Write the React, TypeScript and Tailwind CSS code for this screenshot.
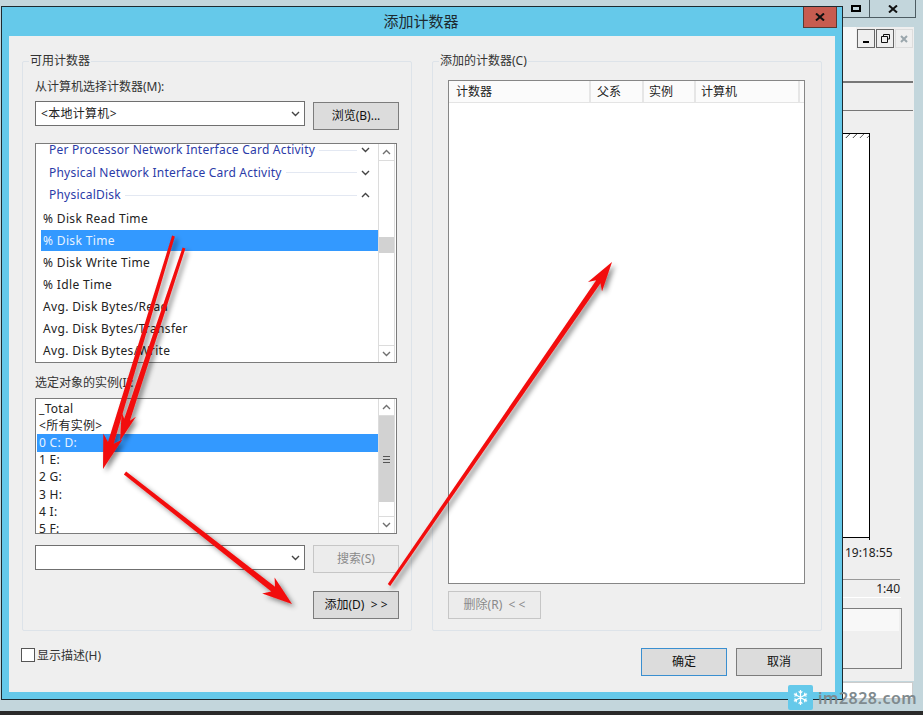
import React from "react";

const ui = { fontFamily: '"Noto Sans", "Noto Sans CJK SC", sans-serif' };

function Chevron({ up = false, color = "#555", w = 9 }: { up?: boolean; color?: string; w?: number }) {
  return (
    <svg width={w} height={6} viewBox="0 0 9 6" className="block">
      <path d={up ? "M1 5 L4.5 1.5 L8 5" : "M1 1 L4.5 4.5 L8 1"} fill="none" stroke={color} strokeWidth="1.4" />
    </svg>
  );
}

function Btn({ children, disabled, primary, wide }: { children: React.ReactNode; disabled?: boolean; primary?: boolean; wide?: boolean }) {
  const look = disabled
    ? "border-[#c6c6c6] bg-[#ececec] text-[#8a8a8a]"
    : primary
      ? "border-[#3a8fd0] bg-[#dcdcdc] text-[#111]"
      : "border-[#7c7c7c] bg-[#dcdcdc] text-[#111]";
  return <div className={`flex h-[28px] items-center justify-center border text-[12px] ${wide ? "w-[93px]" : "w-[86px]"} ${look}`}>{children}</div>;
}

function Select({ text }: { text?: string }) {
  return (
    <div className="flex h-[25px] w-[270px] items-center justify-between border border-[#6f6f6f] bg-white pl-[5px] pr-[4px] text-[12px] tracking-[0.3px] text-[#222]">
      <span>{text}</span>
      <Chevron color="#444" />
    </div>
  );
}

function Group({ title, children }: { title: string; children: React.ReactNode }) {
  return (
    <div className="relative h-[570px] w-[390px] rounded-[2px] border border-[#dde3e9]">
      <span className="absolute left-[6px] top-[-10px] bg-[#efefef] px-[1px] text-[12px] leading-[17px] text-[#333]">{title}</span>
      {children}
    </div>
  );
}

function ScrollBar({ children }: { children: React.ReactNode }) {
  return <div className="flex w-[17px] shrink-0 flex-col border-l border-r border-[#dcdcdc] bg-white">{children}</div>;
}

function ScrollEnd({ up }: { up?: boolean }) {
  return (
    <div className={`flex h-[17px] shrink-0 items-center justify-center border-[#dcdcdc] ${up ? "border-b" : "border-t"}`}>
      <Chevron up={up} color="#707070" />
    </div>
  );
}

function HeaderRow({ text, open }: { text: string; open?: boolean }) {
  return (
    <div className="flex h-[22.5px] items-center pl-[8px] pr-[8px] tracking-[0.22px]">
      <span className="whitespace-nowrap text-[#2b3ba8]">{text}</span>
      <span className="mx-[4px] h-px flex-1 bg-[#e3e8f2]" />
      <Chevron up={open} color="#444" />
    </div>
  );
}

function CounterRow({ text, selected }: { text: string; selected?: boolean }) {
  return (
    <div className={`flex items-center pl-[2px] ${selected ? "mb-[1px] h-[21px] bg-[#3399ff] text-[#e8f3ff]" : "h-[22px] text-[#222]"}`}>
      {text}
    </div>
  );
}

function CounterList() {
  return (
    <div className="flex h-[220px] w-[362px] border border-[#7b7b7b] bg-white text-[12px] tracking-[0.35px]">
      <div className="h-full flex-1 overflow-hidden pl-[5px]">
        <div className="pt-[0.5px]">
          <div className="mb-[1.5px] flex flex-col">
            <div className="-mt-[5.5px]">
              <HeaderRow text="Per Processor Network Interface Card Activity" />
            </div>
            <HeaderRow text="Physical Network Interface Card Activity" />
            <HeaderRow text="PhysicalDisk" open />
          </div>
          <CounterRow text="% Disk Read Time" />
          <CounterRow text="% Disk Time" selected />
          <CounterRow text="% Disk Write Time" />
          <CounterRow text="% Idle Time" />
          <CounterRow text="Avg. Disk Bytes/Read" />
          <CounterRow text="Avg. Disk Bytes/Transfer" />
          <CounterRow text="Avg. Disk Bytes/Write" />
        </div>
      </div>
      <ScrollBar>
        <ScrollEnd up />
        <div className="h-[76px]" />
        <div className="h-[16px] bg-[#d2d2d2]" />
        <div className="flex-1" />
        <ScrollEnd />
      </ScrollBar>
      <div className="w-[1px]" />
    </div>
  );
}

function InstanceList() {
  const rows = ["_Total", "<所有实例>", "0 C: D:", "1 E:", "2 G:", "3 H:", "4 I:", "5 F:"];
  return (
    <div className="flex h-[136px] w-[362px] border border-[#7b7b7b] bg-white text-[12px] tracking-[0.3px]">
      <div className="h-full flex-1 overflow-hidden pl-[1px]">
        <div className="mt-[1px]">
          {rows.map((r, i) => (
            <div key={r} className={`flex h-[17.2px] items-center pl-[2px] ${i === 2 ? "bg-[#3399ff] text-[#e8f3ff]" : "text-[#222]"}`}>
              {r}
            </div>
          ))}
        </div>
      </div>
      <ScrollBar>
        <ScrollEnd up />
        <div className="flex h-[86px] flex-col items-center justify-center gap-[2px] bg-[#d2d2d2]">
          <span className="h-px w-[7px] bg-[#555]" />
          <span className="h-px w-[7px] bg-[#555]" />
          <span className="h-px w-[7px] bg-[#555]" />
        </div>
        <div className="flex-1" />
        <ScrollEnd />
      </ScrollBar>
      <div className="w-[1px]" />
    </div>
  );
}

function LeftGroup() {
  return (
    <Group title="可用计数器">
      <div className="pl-[12px] pt-[16px]">
        <div className="text-[12px] leading-[17px] text-[#333]">从计算机选择计数器(M):</div>
        <div className="mt-[6px] flex items-start gap-[8px]">
          <Select text="<本地计算机>" />
          <div className="mt-[1px]"><Btn>浏览(B)...</Btn></div>
        </div>
        <div className="mt-[13px]"><CounterList /></div>
        <div className="mt-[11px] text-[12px] leading-[17px] text-[#333]">选定对象的实例(I):</div>
        <div className="mt-[7px]"><InstanceList /></div>
        <div className="mt-[11px] flex items-start gap-[8px]">
          <Select />
          <Btn disabled>搜索(S)</Btn>
        </div>
        <div className="mt-[18px] flex justify-end pr-[12px]">
          <Btn>添加(D)&nbsp;&nbsp;&gt; &gt;</Btn>
        </div>
      </div>
    </Group>
  );
}

function RightGroup() {
  const cols = [
    { t: "计数器", c: "w-[142px] pl-[7px]" },
    { t: "父系", c: "w-[53px] pl-[6px]" },
    { t: "实例", c: "w-[52px] pl-[5px]" },
    { t: "计算机", c: "w-[104px] pl-[5px]" },
  ];
  return (
    <Group title="添加的计数器(C)">
      <div className="pl-[15px] pt-[18px]">
        <div className="h-[504px] w-[357px] border border-[#868686] bg-white">
          <div className="flex h-[22px] border-b border-[#e4e4e4] bg-[#fbfbfb] text-[12px] text-[#222]">
            {cols.map((col) => (
              <div key={col.t} className={`flex items-center border-r-2 border-[#e6e6e6] ${col.c}`}>{col.t}</div>
            ))}
          </div>
        </div>
        <div className="mt-[7px]">
          <Btn disabled wide>删除(R)&nbsp;&nbsp;&lt; &lt;</Btn>
        </div>
      </div>
    </Group>
  );
}

function Dialog() {
  return (
    <div className="absolute left-[1px] top-[6px] flex h-[694px] w-[842px] flex-col border border-[#1d2a30] bg-[#65c9ea]" style={ui}>
      <div className="relative flex h-[29px] shrink-0 items-center justify-center pr-[2px] text-[15px] text-[#1d2a30]">
        添加计数器
        <div className="absolute right-[5px] top-0 flex h-[21px] w-[34px] items-center justify-center border border-t-0 border-[#5a3a34] bg-[#c75c50]">
          <svg width="10" height="8" viewBox="0 0 10 8"><path d="M1 0.5 L9 7.5 M9 0.5 L1 7.5" stroke="#111" strokeWidth="2" /></svg>
        </div>
      </div>
      <div className="ml-[7px] flex h-[656px] w-[826px] flex-col bg-[#efefef] pl-[13px] pt-[25px]">
        <div className="flex gap-[20px]">
          <LeftGroup />
          <RightGroup />
        </div>
        <div className="mt-[17px] flex items-start">
          <div className="-ml-px h-[14px] w-[14px] border border-[#555] bg-white" />
          <span className="ml-[2px] mt-[1px] text-[12px] leading-[14px] text-[#333]">显示描述(H)</span>
          <div className="ml-auto mr-[13px] flex gap-[9px]">
            <Btn primary>确定</Btn>
            <Btn>取消</Btn>
          </div>
        </div>
      </div>
    </div>
  );
}

function BackWindow() {
  return (
    <div className="absolute left-[843px] top-0 h-[711px] w-[80px] text-[#222]" style={ui}>
      <div className="flex h-[18px] w-[73px] border-b border-r border-[#4d5c62]">
        <div className="flex w-[27px] items-center justify-center border-r border-[#4d5c62]">
          <div className="h-[7px] w-[10px] border-2 border-black" />
        </div>
        <div className="flex flex-1 items-center justify-center">
          <svg width="10" height="8" viewBox="0 0 10 8"><path d="M1 0.5 L9 7.5 M9 0.5 L1 7.5" stroke="#111" strokeWidth="2" /></svg>
        </div>
      </div>
      <div className="mt-[9px] h-[654px] w-[71px] bg-[#efefef]">
        <div className="flex h-[23px] items-start">
          <div className="h-[23px] w-[13px] bg-[#f7f7f7]" />
          <div className="ml-[1px] mt-[2px] flex gap-px">
            <div className="flex h-[19px] w-[18px] items-end justify-center border border-[#666] pb-[4px]"><span className="h-[2px] w-[6px] bg-black" /></div>
            <div className="flex h-[19px] w-[18px] items-center justify-center border border-[#666]">
              <svg width="9" height="9" viewBox="0 0 9 9"><path d="M2.5 2 V0.5 H8.5 V5 H6.5 M0.5 2.5 H6.5 V8.5 H0.5 Z" fill="none" stroke="#111" /></svg>
            </div>
            <div className="flex h-[19px] w-[18px] items-center justify-center border border-[#ddd]">
              <svg width="8" height="8" viewBox="0 0 8 8"><path d="M1 1 L7 7 M7 1 L1 7" stroke="#9aa6ac" strokeWidth="2" /></svg>
            </div>
          </div>
        </div>
        <div className="mt-[31px] h-[2px] w-[70px] bg-[#777]" />
        <div className="mt-[27px] h-px w-[70px] bg-[#777]" />
        <div className="relative mt-[22px] h-[405px] w-[27px] border-b border-r border-t border-black bg-white">
          <div className="h-[4px] bg-[repeating-linear-gradient(135deg,#fff_0,#fff_4px,#555_5px)]" />
          <span className="absolute right-[-1px] top-full h-[3px] w-px bg-black" />
        </div>
        <div className="mt-[6px] pl-[2px] text-[12px] leading-[17px] text-[#1c1c1c]">19:18:55</div>
        <div className="mt-[18px] h-px w-[57px] bg-[#999]" />
        <div className="h-[17px] w-[57px] text-right text-[12px] leading-[17px]">1:40</div>
        <div className="h-px w-[58px] bg-white" />
        <div className="mt-[10px] h-[61px] w-[59px] border border-l-0 border-[#7c7c7c]">
          <div className="h-[22px] w-[56px] bg-[#f8f8f8]" />
        </div>
      </div>
      <div className="mt-[1px] h-[17px] w-[70px] border border-[#ccc] border-l-0 bg-white" />
    </div>
  );
}

function Arrow({ x1, y1, x2, y2, head = 34, hw = 11, tail = 2.2, mid = 0 }: { x1: number; y1: number; x2: number; y2: number; head?: number; hw?: number; tail?: number; mid?: number }) {
  const dx = x2 - x1;
  const dy = y2 - y1;
  const l = Math.hypot(dx, dy);
  const ux = dx / l;
  const uy = dy / l;
  const nx = -uy;
  const ny = ux;
  const bx = x2 - ux * head;
  const by = y2 - uy * head;
  const nb = x2 - ux * head * 0.8;
  const nby = y2 - uy * head * 0.8;
  const sw = mid || tail * 1.1;
  const p = [
    [x1 + nx * tail * 0.5, y1 + ny * tail * 0.5],
    [nb + nx * sw, nby + ny * sw],
    [bx + nx * hw, by + ny * hw],
    [x2, y2],
    [bx - nx * hw, by - ny * hw],
    [nb - nx * sw, nby - ny * sw],
    [x1 - nx * tail * 0.5, y1 - ny * tail * 0.5],
  ]
    .map((a) => a.map((v) => v.toFixed(1)).join(","))
    .join(" ");
  return <polygon points={p} fill="#f20d0d" />;
}

function Arrows() {
  return (
    <svg className="pointer-events-none absolute left-0 top-0" width="923" height="715" viewBox="0 0 923 715">
      <defs>
        <filter id="sh" x="-20%" y="-20%" width="140%" height="140%">
          <feDropShadow dx="3" dy="3" stdDeviation="2.5" floodColor="#000" floodOpacity="0.45" />
        </filter>
      </defs>
      <g filter="url(#sh)">
        <Arrow x1={173.5} y1={236} x2={103} y2={469} head={34} hw={10} tail={3} mid={3} />
        <Arrow x1={184} y1={248} x2={120} y2={441} head={28} hw={7.5} tail={3} mid={3} />
        <Arrow x1={125} y1={473} x2={292} y2={604} head={30} hw={10} tail={3.5} mid={3} />
        <Arrow x1={389} y1={585} x2={612} y2={262} head={30} hw={8.5} tail={3} mid={2.6} />
      </g>
    </svg>
  );
}

function Watermark() {
  return (
    <div className="absolute left-[788px] top-[685px] flex items-center gap-[5px]" style={ui}>
      <div className="flex h-[25px] w-[25px] items-center justify-center rounded-[2px] bg-[#65c9ea]">
        <svg width="17" height="17" viewBox="0 0 18 18" fill="none" stroke="#fff" strokeWidth="1.3">
          <path d="M9 1 V17 M2 5 L16 13 M16 5 L2 13 M7 2.5 L9 4.5 L11 2.5 M7 15.5 L9 13.5 L11 15.5 M2.5 7.5 L5 6.8 L4.2 4 M15.5 7.5 L13 6.8 L13.8 4 M2.5 10.5 L5 11.2 L4.2 14 M15.5 10.5 L13 11.2 L13.8 14" />
        </svg>
      </div>
      <span className="text-[16px] font-semibold leading-none tracking-[0.5px] text-[#7f8a8e]">im2828.com</span>
    </div>
  );
}

export default function App() {
  return (
    <div className="relative h-[715px] w-[923px] overflow-hidden bg-[#c3d6dc]">
      <BackWindow />
      <Dialog />
      <div className="absolute bottom-0 left-0 h-[4px] w-[923px] bg-[#2a2a2a]" />
      <Watermark />
      <Arrows />
    </div>
  );
}
